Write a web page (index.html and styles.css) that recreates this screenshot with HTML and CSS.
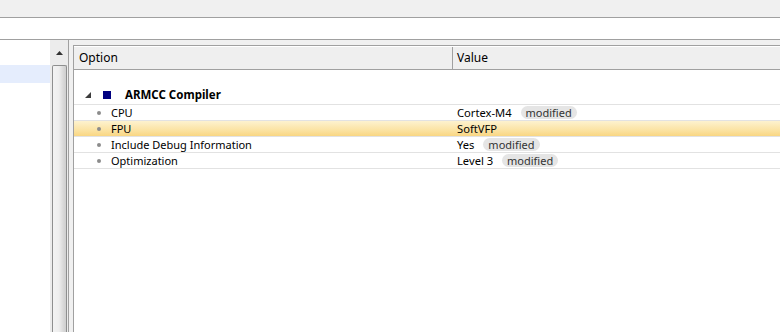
FILE: index.html
```html
<html>
	<head>
		<link rel="stylesheet" href="styles.css">
	</head>
	<body>
		<div id="page">
			<div class="topbar"></div>
			<div class="toolbar"></div>
			<div class="main">
				<div class="leftpane">
					<div class="tree">
						<div class="tree-spacer"></div>
						<div class="tree-row selected"></div>
					</div>
					<div class="vscroll">
						<div class="vscroll-up">
							<svg width="7" height="4" viewBox="0 0 7 4"><path d="M0 4 L3.5 0 L7 4 Z" fill="#333"/></svg>
						</div>
						<div class="vscroll-thumb"></div>
					</div>
				</div>
				<div class="splitter"></div>
				<div class="rightpane">
					<div class="grid">
						<div class="grid-head">
							<div class="col-option">Option</div>
							<div class="col-value">Value</div>
						</div>
						<div class="grid-blank"></div>
						<div class="group-row">
							<svg class="expander" width="6" height="6" viewBox="0 0 6 6"><path d="M6 0 L6 6 L0 6 Z" fill="#3c3c3c"/></svg>
							<span class="group-icon"></span>
							<span class="group-title">ARMCC Compiler</span>
						</div>
						<div class="row">
							<div class="col-option"><span class="bullet"></span>CPU</div>
							<div class="col-value">Cortex-M4 <span class="badge">modified</span></div>
						</div>
						<div class="row hot">
							<div class="col-option"><span class="bullet"></span>FPU</div>
							<div class="col-value">SoftVFP</div>
						</div>
						<div class="row">
							<div class="col-option"><span class="bullet"></span>Include Debug Information</div>
							<div class="col-value">Yes <span class="badge">modified</span></div>
						</div>
						<div class="row">
							<div class="col-option"><span class="bullet"></span>Optimization</div>
							<div class="col-value">Level 3 <span class="badge">modified</span></div>
						</div>
					</div>
				</div>
			</div>
		</div>
	</body>
</html>
```

FILE: styles.css
```css
body {
	padding: 0;
	margin: 0;
	font: 11px "Segoe UI", "Noto Sans", Arial, sans-serif;
	color: #000;
	background-color: #f0f0f0;
	overflow: hidden;
	}

#page {
	width: 780px;
	height: 332px;
	display: flex;
	flex-direction: column;
	}

.topbar {
	height: 17px;
	background-color: #f0f0f0;
	border-bottom: 1px solid #a0a0a0;
	}

.toolbar {
	height: 21px;
	background-color: #fff;
	border-bottom: 1px solid #a0a0a0;
	}

.main {
	flex: 1;
	display: flex;
	min-height: 0;
	}

.leftpane {
	width: 68px;
	display: flex;
	background-color: #fff;
	border-right: 1px solid #a0a0a0;
	}

.tree {
	width: 50px;
	}

.tree-spacer {
	height: 25px;
	}

.tree-row {
	height: 18px;
	}

.selected {
	background-color: #e5edfd;
	}

.vscroll {
	width: 18px;
	display: flex;
	flex-direction: column;
	align-items: center;
	background-color: #ececec;
	}

.vscroll-up {
	height: 25px;
	display: flex;
	align-items: center;
	justify-content: center;
	}

.vscroll-thumb {
	flex: 1;
	width: 13px;
	border: 1px solid #8e8f8f;
	border-bottom: none;
	border-radius: 2px 2px 0 0;
	background: linear-gradient(to right, #f3f3f3, #eeeeee 45%, #d8d8d8 80%, #cfcfcf);
	}

.splitter {
	width: 4px;
	background-color: #f0f0f0;
	}

.rightpane {
	flex: 1;
	padding-top: 5px;
	}

.grid {
	height: 100%;
	background-color: #fff;
	border-top: 1px solid #a0a0a0;
	border-left: 1px solid #a0a0a0;
	}

.grid-head {
	display: flex;
	height: 22px;
	margin-top: 1px;
	background-color: #efefef;
	border-bottom: 1px solid #a0a0a0;
	font-size: 12px;
	}

.grid-head .col-option {
	width: 373px;
	padding-left: 5px;
	line-height: 22px;
	border-right: 1px solid #a0a0a0;
	}

.grid-head .col-value {
	padding-left: 4px;
	line-height: 22px;
	}

.grid-blank {
	height: 15px;
	}

.group-row {
	display: flex;
	align-items: center;
	height: 19px;
	border-bottom: 1px solid #e2e2e2;
	}

.expander {
	margin-left: 11px;
	}

.group-icon {
	width: 8px;
	height: 8px;
	margin-left: 12px;
	background-color: #000080;
	}

.group-title {
	margin-left: 14px;
	font-weight: bold;
	font-size: 11.5px;
	}

.row {
	display: flex;
	align-items: center;
	height: 15px;
	border-bottom: 1px solid #e2e2e2;
	}

.hot {
	background: linear-gradient(to bottom, #fdf2cf, #fbe3a3 60%, #f9d682);
	}

.row .col-option {
	width: 382px;
	display: flex;
	align-items: center;
	}

.row .col-value {
	padding-left: 1px;
	display: flex;
	align-items: center;
	white-space: pre;
	font-size: 11.2px;
	}

.bullet {
	width: 4px;
	height: 4px;
	margin: 0 10px 0 23px;
	border-radius: 50%;
	background-color: #8c8c8c;
	}

.badge {
	margin-left: 6px;
	padding: 0 5px;
	height: 13px;
	line-height: 13px;
	font-size: 11px;
	color: #333;
	border-radius: 7px;
	background-color: #e5e5e5;
	}
```
